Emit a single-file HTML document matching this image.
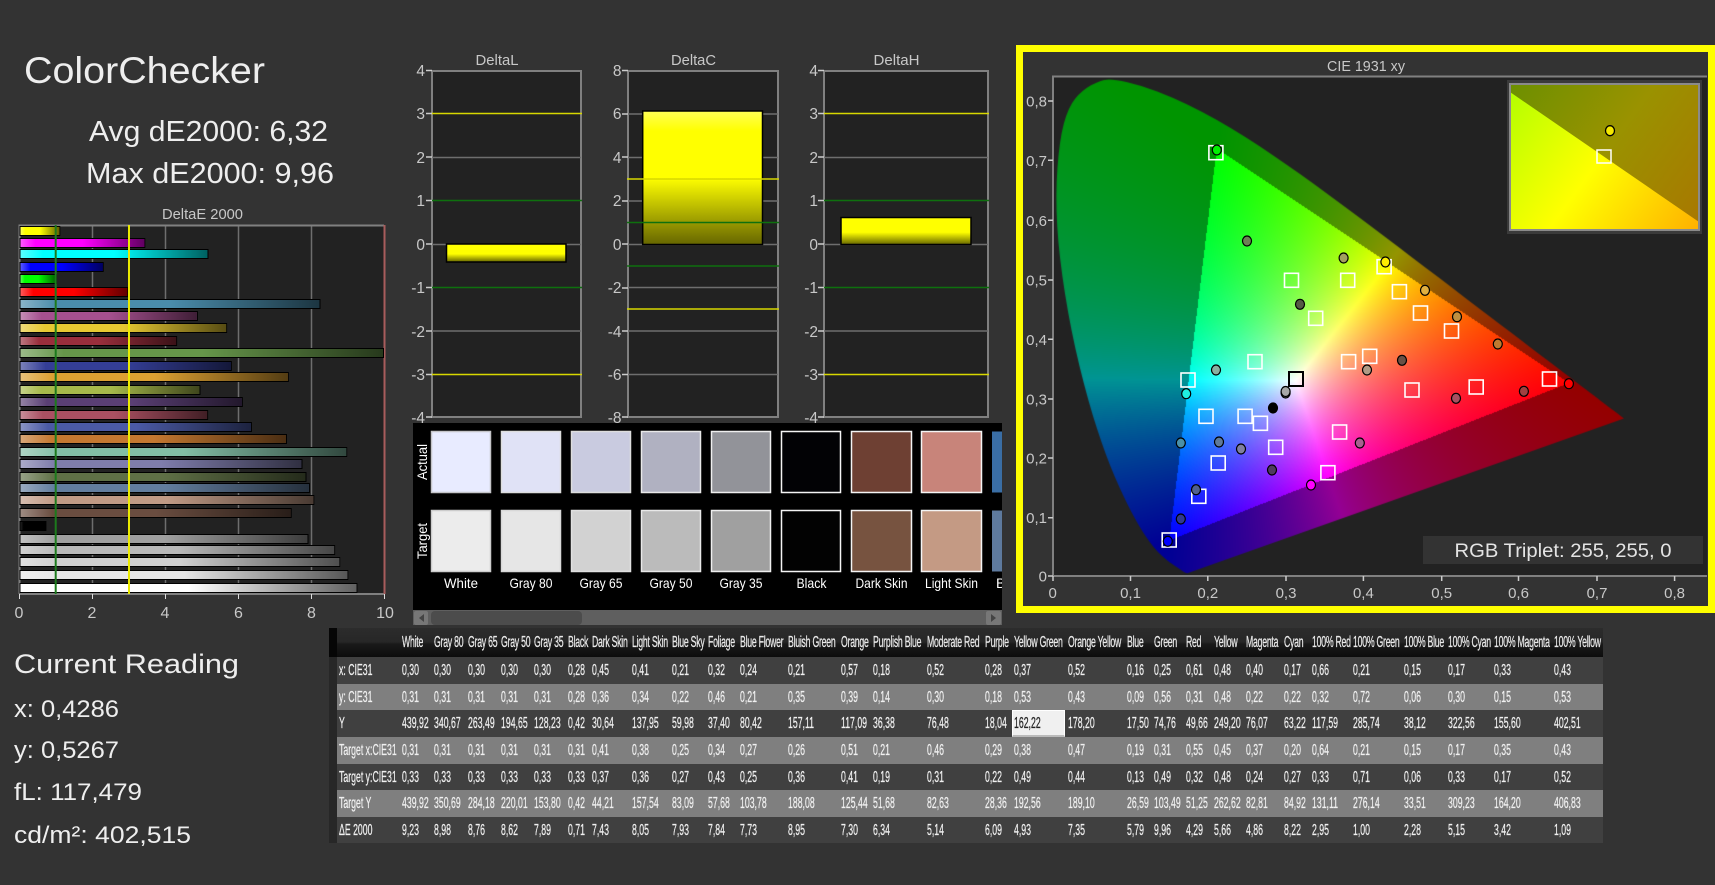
<!DOCTYPE html>
<html lang="en"><head><meta charset="utf-8"><title>ColorChecker</title>
<style>
html,body{margin:0;padding:0;background:#333;width:1715px;height:885px;overflow:hidden}
body{position:relative;font-family:"Liberation Sans",sans-serif}
svg{position:absolute;left:0;top:0}
svg text{font-family:"Liberation Sans",sans-serif}
#frame{position:absolute;left:1016px;top:45px;width:699px;height:568px;box-sizing:border-box;border:7px solid #ff0;background:#333}
#g{position:absolute;left:1053px;top:77px;width:654px;height:498px}
.c{position:absolute;top:628px;white-space:nowrap;font-size:16px;color:#f0f0f0;transform:scaleX(.545);transform-origin:0 0;-webkit-text-stroke:.25px #f0f0f0}
.c p{margin:0;height:27px;line-height:28px}
.c p:nth-child(1){height:29px;line-height:29px;color:#e8e8e8;letter-spacing:-.45px}
.c p:nth-child(3),.c p:nth-child(6),.c p:nth-child(8){height:26px;line-height:27px}
.r{position:absolute;left:337px;width:1266px}
</style></head><body>
<div id="frame"></div>
<svg width="1715" height="885" viewBox="0 0 1715 885">
<defs>
<linearGradient id="hb"><stop offset="0" stop-color="#fff" stop-opacity=".35"/><stop offset=".12" stop-color="#fff" stop-opacity="0"/><stop offset=".5" stop-color="#000" stop-opacity="0"/><stop offset="1" stop-color="#000" stop-opacity=".62"/></linearGradient>
<linearGradient id="vb" x1="0" y1="0" x2="0" y2="1"><stop offset="0" stop-color="#ffff55"/><stop offset=".15" stop-color="#ffff00"/><stop offset=".5" stop-color="#ffff00"/><stop offset="1" stop-color="#666600"/></linearGradient>
<linearGradient id="vs" x1="0" y1="0" x2="0" y2="1"><stop offset="0" stop-color="#ffff00"/><stop offset=".55" stop-color="#ffff00"/><stop offset="1" stop-color="#666600"/></linearGradient>
</defs>
<g fill="#eee">
<text x="24" y="83" font-size="37" textLength="241" lengthAdjust="spacingAndGlyphs">ColorChecker</text>
<text x="89" y="141" font-size="29" textLength="239" lengthAdjust="spacingAndGlyphs">Avg dE2000: 6,32</text>
<text x="86" y="183" font-size="29" textLength="248" lengthAdjust="spacingAndGlyphs">Max dE2000: 9,96</text>
<text x="14" y="673" font-size="27" textLength="225" lengthAdjust="spacingAndGlyphs">Current Reading</text>
<text x="14" y="717" font-size="24" textLength="105" lengthAdjust="spacingAndGlyphs">x: 0,4286</text>
<text x="14" y="758" font-size="24" textLength="105" lengthAdjust="spacingAndGlyphs">y: 0,5267</text>
<text x="14" y="800" font-size="24" textLength="128" lengthAdjust="spacingAndGlyphs">fL: 117,479</text>
<text x="14" y="843" font-size="24" textLength="177" lengthAdjust="spacingAndGlyphs">cd/m²: 402,515</text>
</g>
<text x="162" y="219" font-size="15" fill="#c8c8c8" textLength="81" lengthAdjust="spacingAndGlyphs">DeltaE 2000</text>

<!-- DeltaE plot -->
<rect x="19" y="225" width="366" height="369" fill="#222"/>
<g stroke="#6e6e6e" stroke-width="1.5"><path d="M92.5 225V594M165.5 225V594M238.5 225V594M311.5 225V594"/></g>
<path d="M19.5 594V225.5H384" fill="none" stroke="#808080" stroke-width="2"/>
<path d="M19 594H385" stroke="#808080" stroke-width="2"/>
<path d="M384.5 225V594" stroke="#a85c5c" stroke-width="2"/>
<path d="M19.5 594v5M92.5 594v5M165.5 594v5M238.5 594v5M311.5 594v5M384.5 594v5" stroke="#ddd" stroke-width="1"/>
<g stroke="#000" stroke-width="1">
<rect x="20" y="226.5" width="39.8" height="9" fill="#ff0"/><rect x="20" y="238.5" width="124.8" height="9" fill="#f0f"/><rect x="20" y="249.5" width="188" height="9" fill="#0ff"/><rect x="20" y="262.5" width="83.2" height="9" fill="#00f"/><rect x="20" y="274.5" width="36.5" height="9" fill="#0f0"/><rect x="20" y="287.5" width="107.7" height="9" fill="#f00"/>
<rect x="20" y="299.5" width="300" height="9" fill="#4a8cab"/><rect x="20" y="311.5" width="177.4" height="9" fill="#a5508f"/><rect x="20" y="323.5" width="206.6" height="9" fill="#e6c832"/><rect x="20" y="336.5" width="156.6" height="9" fill="#9a2e3c"/><rect x="20" y="348.5" width="363.5" height="9" fill="#66964a"/><rect x="20" y="361.5" width="211.3" height="9" fill="#343e96"/>
<rect x="20" y="372.5" width="268.3" height="9" fill="#dca032"/><rect x="20" y="385.5" width="180" height="9" fill="#a6b94a"/><rect x="20" y="397.5" width="222.3" height="9" fill="#5a3f74"/><rect x="20" y="410.5" width="187.6" height="9" fill="#aa5062"/><rect x="20" y="422.5" width="231.4" height="9" fill="#4b5aa5"/><rect x="20" y="434.5" width="266.5" height="9" fill="#c47830"/>
<rect x="20" y="447.5" width="326.7" height="9" fill="#82bea5"/><rect x="20" y="459.5" width="282" height="9" fill="#7f7dac"/><rect x="20" y="472.5" width="286" height="9" fill="#5f7046"/><rect x="20" y="483.5" width="289.4" height="9" fill="#627d9e"/><rect x="20" y="495.5" width="293.8" height="9" fill="#c09a85"/><rect x="20" y="508.5" width="271.2" height="9" fill="#6a4d40"/>
<rect x="20" y="521.5" width="25.9" height="9" fill="#000"/><rect x="20" y="534.5" width="288" height="9" fill="#a0a0a0"/><rect x="20" y="545.5" width="314.6" height="9" fill="#b9b9b9"/><rect x="20" y="557.5" width="319.7" height="9" fill="#d0d0d0"/><rect x="20" y="570.5" width="327.8" height="9" fill="#e6e6e6"/><rect x="20" y="583.5" width="336.9" height="9" fill="#fff"/>
</g>
<g fill="url(#hb)">
<rect x="20.5" y="227" width="38.8" height="8"/><rect x="20.5" y="239" width="123.8" height="8"/><rect x="20.5" y="250" width="187" height="8"/><rect x="20.5" y="263" width="82.2" height="8"/><rect x="20.5" y="275" width="35.5" height="8"/><rect x="20.5" y="288" width="106.7" height="8"/>
<rect x="20.5" y="300" width="299" height="8"/><rect x="20.5" y="312" width="176.4" height="8"/><rect x="20.5" y="324" width="205.6" height="8"/><rect x="20.5" y="337" width="155.6" height="8"/><rect x="20.5" y="349" width="362.5" height="8"/><rect x="20.5" y="362" width="210.3" height="8"/>
<rect x="20.5" y="373" width="267.3" height="8"/><rect x="20.5" y="386" width="179" height="8"/><rect x="20.5" y="398" width="221.3" height="8"/><rect x="20.5" y="411" width="186.6" height="8"/><rect x="20.5" y="423" width="230.4" height="8"/><rect x="20.5" y="435" width="265.5" height="8"/>
<rect x="20.5" y="448" width="325.7" height="8"/><rect x="20.5" y="460" width="281" height="8"/><rect x="20.5" y="473" width="285" height="8"/><rect x="20.5" y="484" width="288.4" height="8"/><rect x="20.5" y="496" width="292.8" height="8"/><rect x="20.5" y="509" width="270.2" height="8"/>
<rect x="20.5" y="522" width="24.9" height="8" opacity=".4"/><rect x="20.5" y="535" width="287" height="8"/><rect x="20.5" y="546" width="313.6" height="8"/><rect x="20.5" y="558" width="318.7" height="8"/><rect x="20.5" y="571" width="326.8" height="8"/><rect x="20.5" y="584" width="335.9" height="8"/>
</g>
<path d="M55.7 225V594" stroke="#1c7a1c" stroke-width="2"/>
<path d="M129 225V594" stroke="#eaea00" stroke-width="2"/>
<g fill="#c8c8c8" font-size="16" text-anchor="middle">
<text x="19" y="618">0</text><text x="92" y="618">2</text><text x="165" y="618">4</text><text x="238.5" y="618">6</text><text x="311.5" y="618">8</text><text x="385" y="618">10</text>
</g>

<!-- Delta charts -->
<g fill="#c8c8c8" font-size="15" text-anchor="middle">
<text x="497" y="65" textLength="43" lengthAdjust="spacingAndGlyphs">DeltaL</text>
<text x="693.5" y="65" textLength="45" lengthAdjust="spacingAndGlyphs">DeltaC</text>
<text x="896.5" y="65" textLength="46" lengthAdjust="spacingAndGlyphs">DeltaH</text>
</g>
<g fill="#222" stroke="#808080" stroke-width="2">
<rect x="432" y="71" width="149" height="346"/><rect x="628" y="71" width="150" height="346"/><rect x="824" y="71" width="164" height="346"/>
</g>
<g stroke="#6e6e6e" stroke-width="1.5" fill="none">
<path d="M432 157.5H581M432 244.5H581M432 331H581"/>
<path d="M628 114H778M628 157.5H778M628 201H778M628 244.5H778M628 287.5H778M628 331H778M628 374.5H778"/>
<path d="M824 157.5H988M824 244.5H988M824 331H988"/>
</g>
<rect x="446.5" y="244" width="119.5" height="18" fill="url(#vs)" stroke="#000" stroke-width="1.5"/>
<rect x="642.7" y="111" width="119.8" height="133.5" fill="url(#vb)" stroke="#000" stroke-width="1.5"/>
<rect x="841" y="217.5" width="130" height="27" fill="url(#vs)" stroke="#000" stroke-width="1.5"/>
<g stroke-width="1.5" fill="none">
<path stroke="#d8d800" d="M431 113.5H582M431 374.5H582M627 179H779M627 309H779M823 113.5H989M823 374.5H989"/>
<path stroke="#0e700e" d="M431 200.5H582M431 287.5H582M627 222.5H779M627 266H779M823 200.5H989M823 287.5H989"/>
</g>
<path stroke="#ccc" stroke-width="1.5" d="M426 70.5h6M426 113.5h6M426 157h6M426 200.5h6M426 244h6M426 287.5h6M426 331h6M426 374.5h6M426 417h6M622 70.5h6M622 114h6M622 157h6M622 201h6M622 244h6M622 288h6M622 331h6M622 374.5h6M622 417h6M818 70.5h6M818 113.5h6M818 157h6M818 200.5h6M818 244h6M818 287.5h6M818 331h6M818 374.5h6M818 417h6"/>
<g fill="#c8c8c8" font-size="15.5" text-anchor="end">
<text x="425" y="76">4</text><text x="425" y="119">3</text><text x="425" y="163">2</text><text x="425" y="206">1</text><text x="425" y="250">0</text><text x="425" y="293">-1</text><text x="425" y="337">-2</text><text x="425" y="380">-3</text><text x="425" y="423">-4</text>
<text x="621.5" y="76">8</text><text x="621.5" y="119">6</text><text x="621.5" y="163">4</text><text x="621.5" y="206">2</text><text x="621.5" y="250">0</text><text x="621.5" y="293">-2</text><text x="621.5" y="337">-4</text><text x="621.5" y="380">-6</text><text x="621.5" y="423">-8</text>
<text x="818" y="76">4</text><text x="818" y="119">3</text><text x="818" y="163">2</text><text x="818" y="206">1</text><text x="818" y="250">0</text><text x="818" y="293">-1</text><text x="818" y="337">-2</text><text x="818" y="380">-3</text><text x="818" y="423">-4</text>
</g>

<!-- Swatch panel -->
<rect x="413" y="423" width="589" height="187" fill="#000"/>
<g stroke-width="1.5">
<rect x="431.5" y="431.5" width="59" height="61" fill="#e8ebff" stroke="#c4c4c8"/><rect x="501.5" y="431.5" width="59" height="61" fill="#e0e2f6" stroke="#ddd"/><rect x="571.5" y="431.5" width="59" height="61" fill="#c9cbe0" stroke="#ddd"/><rect x="641.5" y="431.5" width="59" height="61" fill="#b0b1c1" stroke="#e8e8e8"/><rect x="711.5" y="431.5" width="59" height="61" fill="#929399" stroke="#eee"/><rect x="781.5" y="431.5" width="59" height="61" fill="#020205" stroke="#f4f4f4"/><rect x="851.5" y="431.5" width="60" height="61" fill="#6e4033" stroke="#f4f4f4"/><rect x="921.5" y="431.5" width="60" height="61" fill="#c8847a" stroke="#f4f4f4"/>
<rect x="431.5" y="510.5" width="59" height="61" fill="#ececec" stroke="#ccc"/><rect x="501.5" y="510.5" width="59" height="61" fill="#e6e6e6" stroke="#d8d8d8"/><rect x="571.5" y="510.5" width="59" height="61" fill="#d2d2d2" stroke="#e0e0e0"/><rect x="641.5" y="510.5" width="59" height="61" fill="#bbb" stroke="#e8e8e8"/><rect x="711.5" y="510.5" width="59" height="61" fill="#a0a0a0" stroke="#eee"/><rect x="781.5" y="510.5" width="59" height="61" fill="#020202" stroke="#f4f4f4"/><rect x="851.5" y="510.5" width="60" height="61" fill="#775340" stroke="#f4f4f4"/><rect x="921.5" y="510.5" width="60" height="61" fill="#c49a84" stroke="#f4f4f4"/>
</g>
<rect x="992" y="431.5" width="10" height="61" fill="#3a6ea5"/><rect x="992" y="510.5" width="10" height="61" fill="#5e7a9e"/>
<g fill="#fff" font-size="14" text-anchor="middle">
<text x="461" y="588" textLength="34" lengthAdjust="spacingAndGlyphs">White</text>
<text x="531" y="588" textLength="43" lengthAdjust="spacingAndGlyphs">Gray 80</text>
<text x="601" y="588" textLength="43" lengthAdjust="spacingAndGlyphs">Gray 65</text>
<text x="671" y="588" textLength="43" lengthAdjust="spacingAndGlyphs">Gray 50</text>
<text x="741" y="588" textLength="43" lengthAdjust="spacingAndGlyphs">Gray 35</text>
<text x="811.5" y="588" textLength="30" lengthAdjust="spacingAndGlyphs">Black</text>
<text x="881.5" y="588" textLength="52" lengthAdjust="spacingAndGlyphs">Dark Skin</text>
<text x="951.5" y="588" textLength="53" lengthAdjust="spacingAndGlyphs">Light Skin</text>
</g>
<svg x="990" y="570" width="12" height="30"><text x="6" y="18" fill="#fff" font-size="14">Blue Sky</text></svg>
<text transform="translate(427 462) rotate(-90)" fill="#fff" font-size="14" text-anchor="middle" textLength="36" lengthAdjust="spacingAndGlyphs">Actual</text>
<text transform="translate(427 541) rotate(-90)" fill="#fff" font-size="14" text-anchor="middle" textLength="36" lengthAdjust="spacingAndGlyphs">Target</text>
<rect x="413" y="610" width="589" height="15" fill="#5f5f5f"/>
<rect x="414" y="611" width="14" height="14" rx="2" fill="#777"/>
<path d="M424 614l-5 4 5 4z" fill="#444"/>
<rect x="431" y="611" width="151" height="14" rx="4" fill="#4c4c4c"/>
<rect x="986" y="611" width="15" height="14" rx="2" fill="#777"/>
<path d="M991 614l5 4-5 4z" fill="#444"/>

<!-- CIE base -->
<text x="1366" y="71" fill="#c8c8c8" font-size="15" text-anchor="middle" textLength="78" lengthAdjust="spacingAndGlyphs">CIE 1931 xy</text>
<rect x="1053" y="76" width="654" height="500" fill="#222"/>
<path d="M1053 576V76.5H1707M1053 576H1707" fill="none" stroke="#808080" stroke-width="2"/>
<path stroke="#ccc" stroke-width="1.5" d="M1048 101h5M1048 160.3h5M1048 220.3h5M1048 280h5M1048 339.3h5M1048 399h5M1048 458h5M1048 517.7h5M1048 576h5M1053 576v5M1130.5 576v5M1207.8 576v5M1286 576v5M1363.4 576v5M1441.7 576v5M1518.5 576v5M1597 576v5M1674.6 576v5"/>
<g fill="#c8c8c8" font-size="15" text-anchor="end">
<text x="1047" y="106.5">0,8</text><text x="1047" y="166">0,7</text><text x="1047" y="226">0,6</text><text x="1047" y="285.5">0,5</text><text x="1047" y="345">0,4</text><text x="1047" y="404.5">0,3</text><text x="1047" y="463.5">0,2</text><text x="1047" y="523">0,1</text><text x="1047" y="581.5">0</text>
</g>
<g fill="#c8c8c8" font-size="15" text-anchor="middle">
<text x="1052.7" y="598">0</text><text x="1130.5" y="598">0,1</text><text x="1207.8" y="598">0,2</text><text x="1286" y="598">0,3</text><text x="1363.4" y="598">0,4</text><text x="1441.7" y="598">0,5</text><text x="1518.5" y="598">0,6</text><text x="1597" y="598">0,7</text><text x="1674.6" y="598">0,8</text>
</g>
</svg>

<canvas id="g" width="654" height="498"></canvas>

<svg width="1715" height="885" viewBox="0 0 1715 885">
<defs>
<linearGradient id="ia" gradientUnits="userSpaceOnUse" x1="1510" y1="92" x2="1699" y2="230"><stop offset="0" stop-color="#b4ff00"/><stop offset=".48" stop-color="#ffff00"/><stop offset="1" stop-color="#ffb000"/></linearGradient>
<linearGradient id="ib" gradientUnits="userSpaceOnUse" x1="1510" y1="84" x2="1699" y2="222"><stop offset="0" stop-color="#6c9000"/><stop offset=".5" stop-color="#9a9200"/><stop offset="1" stop-color="#a87800"/></linearGradient>
</defs>
<rect x="1507" y="80" width="195" height="154" fill="#3a3a3a"/>
<rect x="1510" y="84" width="189" height="146" fill="url(#ib)"/>
<polygon points="1510,92 1699,222 1699,230 1510,230" fill="url(#ia)"/>
<rect x="1510" y="84" width="189" height="146" fill="none" stroke="#8a8a8a" stroke-width="2"/>
<rect x="1597" y="150" width="14" height="13" fill="none" stroke="#fff" stroke-width="1.5"/>
<ellipse cx="1610" cy="130.7" rx="4.5" ry="5" fill="#f4e800" stroke="#000" stroke-width="1.3"/>

<g fill="none" stroke="#fff" stroke-width="1.6">
<rect x="1208.9" y="145.7" width="14" height="14"/><rect x="1377.1" y="259.7" width="14" height="14"/><rect x="1284.5" y="273.3" width="14" height="14"/><rect x="1340.7" y="273.3" width="14" height="14"/><rect x="1392.4" y="284.7" width="14" height="14"/><rect x="1413.5" y="306" width="14" height="14"/><rect x="1444.5" y="324" width="14" height="14"/><rect x="1308.7" y="311.3" width="14" height="14"/><rect x="1248" y="354.7" width="14" height="14"/><rect x="1341.6" y="354.7" width="14" height="14"/><rect x="1362.7" y="349.3" width="14" height="14"/><rect x="1181" y="373" width="14" height="14"/><rect x="1542.5" y="372" width="14" height="14"/><rect x="1469.2" y="380" width="14" height="14"/><rect x="1405" y="383" width="14" height="14"/><rect x="1199" y="409.3" width="14" height="14"/><rect x="1238.1" y="409.3" width="14" height="14"/><rect x="1253.4" y="416.3" width="14" height="14"/><rect x="1332.6" y="425" width="14" height="14"/><rect x="1268.7" y="440.3" width="14" height="14"/><rect x="1211.2" y="456" width="14" height="14"/><rect x="1320.9" y="465.7" width="14" height="14"/><rect x="1191.8" y="489.3" width="14" height="14"/><rect x="1162.2" y="533" width="14" height="14"/>
</g>
<rect x="1289" y="372" width="14" height="14" fill="none" stroke="#000" stroke-width="2"/>
<g stroke="#000" stroke-width="1.2">
<ellipse cx="1216.8" cy="150" rx="4.5" ry="5" fill="#00f000"/><ellipse cx="1247" cy="241" rx="4.5" ry="5" fill="#6d8055"/><ellipse cx="1343.6" cy="258" rx="4.5" ry="5" fill="#a3a060"/><ellipse cx="1385.4" cy="262" rx="4.5" ry="5" fill="#ffee00"/><ellipse cx="1425" cy="290.3" rx="4.5" ry="5" fill="#e0b040"/><ellipse cx="1300" cy="304.3" rx="4.5" ry="5" fill="#555a45"/><ellipse cx="1457" cy="316.7" rx="4.5" ry="5" fill="#c09040"/><ellipse cx="1497.8" cy="344" rx="4.5" ry="5" fill="#c07a30"/><ellipse cx="1402" cy="360.3" rx="4.5" ry="5" fill="#6a5045"/><ellipse cx="1216" cy="370" rx="4.5" ry="5" fill="#8ab0a0"/><ellipse cx="1367" cy="370" rx="4.5" ry="5" fill="#b09a85"/>
<ellipse cx="1186.2" cy="393.7" rx="4.5" ry="5" fill="#20f0e0"/><ellipse cx="1568.9" cy="383.7" rx="4.5" ry="5" fill="#f00"/><ellipse cx="1523.9" cy="391.3" rx="4.5" ry="5" fill="#a04040"/><ellipse cx="1456" cy="398.3" rx="4.5" ry="5" fill="#a85060"/><ellipse cx="1285.6" cy="393" rx="4.5" ry="5" fill="#808080"/><ellipse cx="1285.6" cy="391.5" rx="4.5" ry="5" fill="#a8a8a8"/><ellipse cx="1273" cy="408" rx="4.5" ry="5" fill="#000"/><ellipse cx="1180.8" cy="443" rx="4.5" ry="5" fill="#4a90a8"/><ellipse cx="1219" cy="442" rx="4.5" ry="5" fill="#607a9a"/><ellipse cx="1241" cy="449" rx="4.5" ry="5" fill="#8080a0"/><ellipse cx="1359.8" cy="443" rx="4.5" ry="5" fill="#a86090"/><ellipse cx="1272" cy="470" rx="4.5" ry="5" fill="#503a60"/><ellipse cx="1311" cy="485" rx="4.5" ry="5" fill="#f0f"/><ellipse cx="1196" cy="489.7" rx="4.5" ry="5" fill="#506090"/><ellipse cx="1180.8" cy="519" rx="4.5" ry="5" fill="#303a90"/><ellipse cx="1167.8" cy="541.3" rx="4.5" ry="5" fill="#00f"/>
</g>
<rect x="1423" y="536" width="280" height="28" fill="#333"/>
<text x="1563" y="557" fill="#e4e4e4" font-size="19" text-anchor="middle" textLength="217" lengthAdjust="spacingAndGlyphs">RGB Triplet: 255, 255, 0</text>
</svg>

<!-- Table -->
<div style="position:absolute;left:329px;top:628px;width:1274px;height:29px;background:linear-gradient(#2c2c2c,#272727 48%,#1a1a1a 55%,#0c0c0c)"></div>
<div style="position:absolute;left:329px;top:628px;width:8px;height:29px;background:#060606"></div>
<div style="position:absolute;left:329px;top:657px;width:8px;height:186px;background:#272727"></div>
<div class="r" style="top:657px;height:27px;background:#404040"></div>
<div class="r" style="top:684px;height:26px;background:#7f7f7f"></div>
<div class="r" style="top:710px;height:27px;background:#404040"></div>
<div class="r" style="top:737px;height:27px;background:#7f7f7f"></div>
<div class="r" style="top:764px;height:26px;background:#404040"></div>
<div class="r" style="top:790px;height:27px;background:#7f7f7f"></div>
<div class="r" style="top:817px;height:26px;background:#404040"></div>
<div style="position:absolute;left:1012px;top:710px;width:53px;height:27px;box-sizing:border-box;background:#f0f0f0;border:1px solid #fff;border-bottom:2px solid #bbb"></div>

<div class="c" style="left:339px"><p>&nbsp;<p>x: CIE31<p>y: CIE31<p>Y<p>Target x:CIE31<p>Target y:CIE31<p>Target Y<p>ΔE 2000</div>
<div class="c" style="left:402px"><p>White<p>0,30<p>0,31<p>439,92<p>0,31<p>0,33<p>439,92<p>9,23</div>
<div class="c" style="left:434px"><p>Gray 80<p>0,30<p>0,31<p>340,67<p>0,31<p>0,33<p>350,69<p>8,98</div>
<div class="c" style="left:467.7px"><p>Gray 65<p>0,30<p>0,31<p>263,49<p>0,31<p>0,33<p>284,18<p>8,76</div>
<div class="c" style="left:501px"><p>Gray 50<p>0,30<p>0,31<p>194,65<p>0,31<p>0,33<p>220,01<p>8,62</div>
<div class="c" style="left:534.3px"><p>Gray 35<p>0,30<p>0,31<p>128,23<p>0,31<p>0,33<p>153,80<p>7,89</div>
<div class="c" style="left:568px"><p>Black<p>0,28<p>0,28<p>0,42<p>0,31<p>0,33<p>0,42<p>0,71</div>
<div class="c" style="left:592.3px"><p>Dark Skin<p>0,45<p>0,36<p>30,64<p>0,41<p>0,37<p>44,21<p>7,43</div>
<div class="c" style="left:632px"><p>Light Skin<p>0,41<p>0,34<p>137,95<p>0,38<p>0,36<p>157,54<p>8,05</div>
<div class="c" style="left:672.3px"><p>Blue Sky<p>0,21<p>0,22<p>59,98<p>0,25<p>0,27<p>83,09<p>7,93</div>
<div class="c" style="left:708.3px"><p>Foliage<p>0,32<p>0,46<p>37,40<p>0,34<p>0,43<p>57,68<p>7,84</div>
<div class="c" style="left:739.7px"><p>Blue Flower<p>0,24<p>0,21<p>80,42<p>0,27<p>0,25<p>103,78<p>7,73</div>
<div class="c" style="left:788.3px"><p>Bluish Green<p>0,21<p>0,35<p>157,11<p>0,26<p>0,36<p>188,08<p>8,95</div>
<div class="c" style="left:841px"><p>Orange<p>0,57<p>0,39<p>117,09<p>0,51<p>0,41<p>125,44<p>7,30</div>
<div class="c" style="left:873.3px"><p>Purplish Blue<p>0,18<p>0,14<p>36,38<p>0,21<p>0,19<p>51,68<p>6,34</div>
<div class="c" style="left:927px"><p>Moderate Red<p>0,52<p>0,30<p>76,48<p>0,46<p>0,31<p>82,63<p>5,14</div>
<div class="c" style="left:985.3px"><p>Purple<p>0,28<p>0,18<p>18,04<p>0,29<p>0,22<p>28,36<p>6,09</div>
<div class="c" style="left:1014.3px"><p>Yellow Green<p>0,37<p>0,53<p><span style="color:#222;-webkit-text-stroke:.25px #222">162,22</span><p>0,38<p>0,49<p>192,56<p>4,93</div>
<div class="c" style="left:1068.3px"><p>Orange Yellow<p>0,52<p>0,43<p>178,20<p>0,47<p>0,44<p>189,10<p>7,35</div>
<div class="c" style="left:1126.7px"><p>Blue<p>0,16<p>0,09<p>17,50<p>0,19<p>0,13<p>26,59<p>5,79</div>
<div class="c" style="left:1154px"><p>Green<p>0,25<p>0,56<p>74,76<p>0,31<p>0,49<p>103,49<p>9,96</div>
<div class="c" style="left:1186.3px"><p>Red<p>0,61<p>0,31<p>49,66<p>0,55<p>0,32<p>51,25<p>4,29</div>
<div class="c" style="left:1213.7px"><p>Yellow<p>0,48<p>0,48<p>249,20<p>0,45<p>0,48<p>262,62<p>5,66</div>
<div class="c" style="left:1246px"><p>Magenta<p>0,40<p>0,22<p>76,07<p>0,37<p>0,24<p>82,81<p>4,86</div>
<div class="c" style="left:1284px"><p>Cyan<p>0,17<p>0,22<p>63,22<p>0,20<p>0,27<p>84,92<p>8,22</div>
<div class="c" style="left:1311.7px"><p>100% Red<p>0,66<p>0,32<p>117,59<p>0,64<p>0,33<p>131,11<p>2,95</div>
<div class="c" style="left:1353.3px"><p>100% Green<p>0,21<p>0,72<p>285,74<p>0,21<p>0,71<p>276,14<p>1,00</div>
<div class="c" style="left:1403.7px"><p>100% Blue<p>0,15<p>0,06<p>38,12<p>0,15<p>0,06<p>33,51<p>2,28</div>
<div class="c" style="left:1447.7px"><p>100% Cyan<p>0,17<p>0,30<p>322,56<p>0,17<p>0,33<p>309,23<p>5,15</div>
<div class="c" style="left:1493.7px"><p>100% Magenta<p>0,33<p>0,15<p>155,60<p>0,35<p>0,17<p>164,20<p>3,42</div>
<div class="c" style="left:1554.3px"><p>100% Yellow<p>0,43<p>0,53<p>402,51<p>0,43<p>0,52<p>406,83<p>1,09</div>

<script>
(function(){
var cv=document.getElementById('g'),ctx=cv.getContext('2d'),W=654,H=498,L=1053,T=77;
var loc=[[.1741,.005],[.1733,.0048],[.1726,.0048],[.1714,.0051],[.1703,.0058],[.1689,.0069],[.1669,.0086],[.1644,.0109],[.1611,.0138],[.1566,.0177],[.151,.0227],[.144,.0297],[.1355,.0399],[.1241,.0578],[.1096,.0868],[.0913,.1327],[.0687,.2007],[.0454,.295],[.0235,.4127],[.0082,.5384],[.0035,.64],[.0087,.734],[.02,.79],[.0377,.818],[.0608,.835],[.0779,.837],[.1142,.8262],[.1547,.8059],[.1929,.7816],[.2296,.7543],[.2658,.7243],[.3016,.6923],[.3373,.6589],[.3731,.6245],[.4087,.5896],[.4441,.5547],[.4788,.5202],[.5125,.4866],[.5448,.4544],[.5752,.4242],[.6029,.3965],[.627,.3725],[.6482,.3514],[.6658,.334],[.6801,.3197],[.6915,.3083],[.7006,.2993],[.7079,.292],[.714,.2859],[.719,.2809],[.723,.277],[.7347,.2653]];
var P=[[.664,.325],[.211,.72],[.15,.06]],w=[.3127,.329];
function inv(m){var a=m[0][0],b=m[0][1],c=m[0][2],d=m[1][0],e=m[1][1],f=m[1][2],g=m[2][0],h=m[2][1],i=m[2][2],
A=e*i-f*h,B=c*h-b*i,C=b*f-c*e,D=f*g-d*i,E=a*i-c*g,F=c*d-a*f,G=d*h-e*g,H2=b*g-a*h,I=a*e-b*d,det=a*A+b*D+c*G;
return [[A/det,B/det,C/det],[D/det,E/det,F/det],[G/det,H2/det,I/det]];}
var M=[[0,0,0],[0,0,0],[0,0,0]];
for(var k=0;k<3;k++){M[0][k]=P[k][0]/P[k][1];M[1][k]=1;M[2][k]=(1-P[k][0]-P[k][1])/P[k][1];}
var Mi=inv(M),WX=w[0]/w[1],WZ=(1-w[0]-w[1])/w[1],S=[];
for(k=0;k<3;k++)S[k]=Mi[k][0]*WX+Mi[k][1]+Mi[k][2]*WZ;
var img=ctx.createImageData(W,H),d=img.data,g=1,DIM=.58;
for(var py=0;py<H;py++){for(var px=0;px<W;px++){
var x=(px+.5+L-1052.7)/777.5,y=(576-(py+.5+T))/593.75;if(y<.002)y=.002;
var X=x/y,Z=(1-x-y)/y,r=(Mi[0][0]*X+Mi[0][1]+Mi[0][2]*Z)/S[0],gg=(Mi[1][0]*X+Mi[1][1]+Mi[1][2]*Z)/S[1],b=(Mi[2][0]*X+Mi[2][1]+Mi[2][2]*Z)/S[2];
var out=(r<0||gg<0||b<0);r=Math.max(r,0);gg=Math.max(gg,0);b=Math.max(b,0);
var m=Math.max(r,gg,b,1e-6),f=out?DIM:1,i4=(py*W+px)*4;
d[i4]=255*f*Math.pow(r/m,g);d[i4+1]=255*f*Math.pow(gg/m,g);d[i4+2]=255*f*Math.pow(b/m,g);d[i4+3]=255;
}}
ctx.putImageData(img,0,0);
ctx.globalCompositeOperation='destination-in';
ctx.beginPath();
function px_(p){return [1052.7+777.5*p[0]-L,576-593.75*p[1]-T];}
var p0=px_(loc[0]);ctx.moveTo(p0[0],p0[1]);
for(k=1;k<loc.length-1;k++){var a=px_(loc[k]),n=px_(loc[k+1]);ctx.quadraticCurveTo(a[0],a[1],(a[0]+n[0])/2,(a[1]+n[1])/2);}
var e=px_(loc[loc.length-1]);ctx.lineTo(e[0],e[1]);
ctx.closePath();ctx.fillStyle='#000';ctx.fill();
})();
</script>
</body></html>
